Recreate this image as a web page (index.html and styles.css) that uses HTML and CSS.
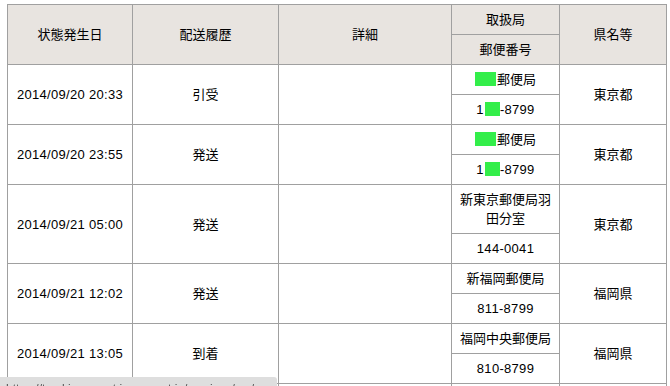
FILE: index.html
```html
<!DOCTYPE html>
<html lang="ja">
<head>
<meta charset="utf-8">
<title>配送履歴</title>
<link rel="stylesheet" href="styles.css">
</head>
<body>
<table class="history">
  <colgroup>
    <col class="c-date"><col class="c-status"><col class="c-detail"><col class="c-office"><col class="c-pref">
  </colgroup>
  <thead>
    <tr>
      <th rowspan="2">状態発生日</th>
      <th rowspan="2">配送履歴</th>
      <th rowspan="2">詳細</th>
      <th>取扱局</th>
      <th rowspan="2">県名等</th>
    </tr>
    <tr><th>郵便番号</th></tr>
  </thead>
  <tbody>
    <tr>
      <td rowspan="2" class="date">2014/09/20 20:33</td>
      <td rowspan="2">引受</td>
      <td rowspan="2"></td>
      <td><span class="mask mask-wide"></span>郵便局</td>
      <td rowspan="2">東京都</td>
    </tr>
    <tr><td class="num">1<span class="mask mask-narrow"></span>-8799</td></tr>

    <tr>
      <td rowspan="2" class="date">2014/09/20 23:55</td>
      <td rowspan="2">発送</td>
      <td rowspan="2"></td>
      <td><span class="mask mask-wide"></span>郵便局</td>
      <td rowspan="2">東京都</td>
    </tr>
    <tr><td class="num">1<span class="mask mask-narrow"></span>-8799</td></tr>

    <tr>
      <td rowspan="2" class="date">2014/09/21 05:00</td>
      <td rowspan="2">発送</td>
      <td rowspan="2"></td>
      <td>新東京郵便局羽田分室</td>
      <td rowspan="2">東京都</td>
    </tr>
    <tr><td class="num">144-0041</td></tr>

    <tr>
      <td rowspan="2" class="date">2014/09/21 12:02</td>
      <td rowspan="2">発送</td>
      <td rowspan="2"></td>
      <td>新福岡郵便局</td>
      <td rowspan="2">福岡県</td>
    </tr>
    <tr><td class="num">811-8799</td></tr>

    <tr>
      <td rowspan="2" class="date">2014/09/21 13:05</td>
      <td rowspan="2">到着</td>
      <td rowspan="2"></td>
      <td>福岡中央郵便局</td>
      <td rowspan="2">福岡県</td>
    </tr>
    <tr><td class="num">810-8799</td></tr>

    <tr>
      <td rowspan="2" class="date">2014/09/21 15:40</td>
      <td rowspan="2">配達中</td>
      <td rowspan="2"></td>
      <td>福岡中央郵便局</td>
      <td rowspan="2">福岡県</td>
    </tr>
    <tr><td class="num">810-8799</td></tr>
  </tbody>
</table>
<div class="statusbar"><span>https://trackings.post.japanpost.jp/services/srv/search/direct?searchKind=S004&amp;locale=ja</span></div>
</body>
</html>
```

FILE: styles.css
```css
html, body {
  margin: 0;
  padding: 0;
  background: #ffffff;
}

body {
  padding: 4px 0 0 7px;
  font-family: "Liberation Sans", "Noto Sans CJK JP", sans-serif;
  font-size: 13px;
  color: #000000;
}

.history {
  border-collapse: collapse;
  table-layout: fixed;
  width: 659px;
}

.c-date { width: 125px; }
.c-status { width: 146px; }
.c-detail { width: 173px; }
.c-office { width: 108px; }
.c-pref { width: 107px; }

.history th,
.history td {
  border: 1px solid #a0a0a0;
  padding: 5px 4px 5px 4px;
  height: 19px;
  line-height: 19px;
  text-align: center;
  vertical-align: middle;
  font-weight: normal;
  word-break: break-all;
}

.history th {
  background: #e8e4e0;
}

.history td.date,
.history td.num {
  letter-spacing: 0.3px;
}

.mask {
  display: inline-block;
  height: 14px;
  background: #33ee4a;
  vertical-align: -2px;
}

.mask-wide { width: 21px; margin-right: 1px; }
.mask-narrow { width: 15px; margin-left: 1px; }

.statusbar {
  position: fixed;
  left: 0;
  bottom: 0;
  width: 277px;
  height: 9px;
  overflow: hidden;
  background: #dedede;
  border-top-right-radius: 3px;
  font-family: "Liberation Sans", sans-serif;
  font-size: 12px;
  line-height: 14px;
  color: #555555;
  white-space: nowrap;
}

.statusbar span {
  display: block;
  padding: 5px 0 0 6px;
}
```
